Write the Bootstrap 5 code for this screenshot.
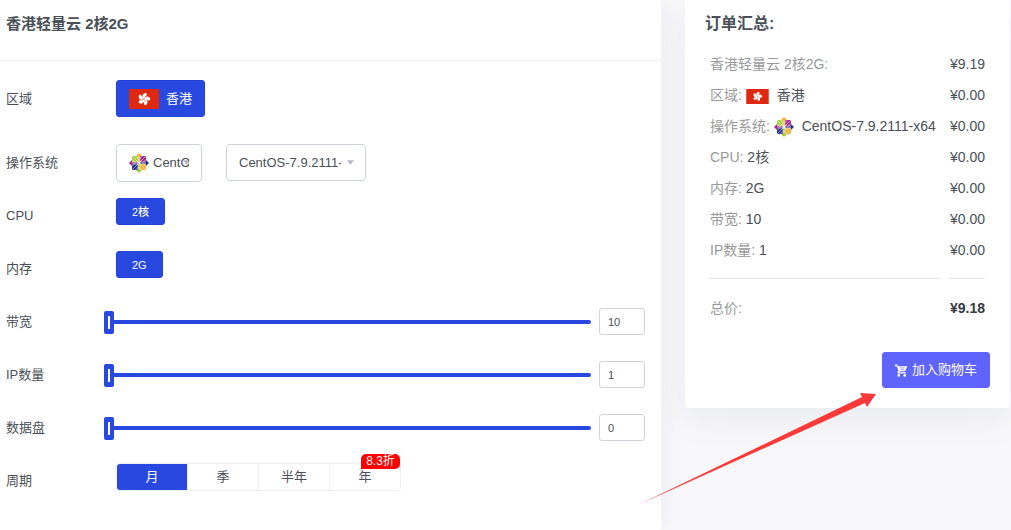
<!DOCTYPE html>
<html lang="zh-CN">
<head>
<meta charset="utf-8">
<meta name="viewport" content="width=device-width, initial-scale=1">
<title>香港轻量云 2核2G</title>
<link href="https://cdn.jsdelivr.net/npm/bootstrap@5.3.0/dist/css/bootstrap.min.css" rel="stylesheet">
<style>
  :root { --brand: #2948df; --ink: #495057; }
  body { background: #f8f8fb; color: var(--ink); font: 13px/20px "Liberation Sans", "Noto Sans CJK SC", sans-serif; }
  .config { min-height: 100vh; box-shadow: 0 0 24px rgba(18, 38, 83, .06); }
  .config-head { height: 61px; padding: 0 6px 12px; border-bottom: 1px solid #eff2f7; }
  .config-head h1 { font-size: 15px; line-height: 20px; font-weight: 700; }
  .opt { min-height: 53px; padding: 0 16px 0 6px; }
  .opt-first { min-height: 75px; }
  .opt-name { flex: 0 0 110px; }
  .opt-name.slim { flex-basis: 98px; }
  .btn-brand { --bs-btn-color: #fff; --bs-btn-bg: var(--brand); --bs-btn-border-color: #2442d6; --bs-btn-hover-color: #fff; --bs-btn-hover-bg: #2442d6; --bs-btn-border-radius: 3px; --bs-btn-font-size: 13px; --bs-btn-line-height: 20px; height: 37px; padding: 0 12px; }
  .btn-flag { gap: 7px; }
  .btn-mini { --bs-btn-font-size: 11px; height: 27px; padding: 0 15px; font-weight: 500; }
  .lift { padding-bottom: 8px; }
  .form-select.pick { height: 37px; padding: 0 24px 0 12px; border-color: #ced4da; border-radius: 4px; font-size: 13px; line-height: 20px; color: var(--ink); background-image: url("data:image/svg+xml,%3Csvg xmlns='http://www.w3.org/2000/svg' viewBox='0 0 8 5'%3E%3Cpath d='M0 0h8L4 5z' fill='%23b4b8c4'/%3E%3C/svg%3E"); background-size: 7px 5px; background-position: right 11px center; }
  .form-select.pick-os { height: 38px; width: 86px; padding: 0 12px 0 36px; }
  .form-select.pick-version { width: 140px; }
  .os-logo { left: 13px; top: 9px; pointer-events: none; }
  .slide { flex: 1; min-width: 0; height: 23px; margin: 0; background: none; appearance: none; -webkit-appearance: none; }
  .slide::-webkit-slider-runnable-track { height: 4px; background: var(--brand); border-radius: 2px; }
  .slide::-webkit-slider-thumb { -webkit-appearance: none; width: 10px; height: 23px; margin-top: -9px; border-radius: 2px; background: linear-gradient(#fff, #fff) center / 2px 13px no-repeat var(--brand); }
  .form-control.amount { width: 46px; height: 27px; padding: 0 8px; border-color: #ced4da; border-radius: 3px; font-size: 11px; line-height: 20px; color: var(--ink); }
  .period { height: 28px; margin-bottom: 8px; border: 1px solid #eff0f2; border-radius: 4px; }
  .period label { width: 71px; line-height: 26px; text-align: center; border-right: 1px solid #eff0f2; cursor: pointer; }
  .period label:last-child { width: 70px; border-right: 0; }
  .period label:first-of-type { border-radius: 3px 0 0 3px; }
  .period .btn-check:checked + label { background: var(--brand); color: #fff; }
  .off-tag { top: -10px; right: 0; width: 39px; height: 15px; border-radius: 5px 5px 5px 0; background: #f00; color: #fff; font-size: 12px; line-height: 15px; }
  .side { flex: 0 0 350px; padding: 0 1px 0 24px; }
  .order { padding: 14px 20px 20px; border-radius: 0 0 4px 4px; box-shadow: 0 12px 36px rgba(18, 38, 63, .06); }
  .order h2 { font-size: 16px; line-height: 20px; font-weight: 700; margin-bottom: 15px; }
  .bill { width: 100%; font-size: 14px; line-height: 31px; }
  .bill th { font-weight: 400; color: #999; padding: 0 5px; height: 31px; white-space: nowrap; }
  .bill td { width: 1px; padding: 0 5px; height: 31px; }
  .bill th span { color: var(--ink); }
  .bill .rule th, .bill .rule td { height: 27px; }
  .bill hr { margin: 11px 0 14px; border-color: #cfd2d6; opacity: .6; }
  .bill .sum { font-weight: 700; color: #343a40; }
  .btn-cart { --bs-btn-color: #fff; --bs-btn-bg: #6064ff; --bs-btn-border-color: #6064ff; --bs-btn-hover-color: #fff; --bs-btn-hover-bg: #5055ee; --bs-btn-border-radius: 3px; --bs-btn-font-size: 13px; --bs-btn-line-height: 20px; height: 36px; padding: 0 12px; margin-top: 28px; }
  .pointer { right: 135px; top: 391px; pointer-events: none; }
</style>
</head>
<body>
<svg class="d-none" aria-hidden="true">
  <symbol id="hk" viewBox="0 0 30 20">
    <path fill="#de2910" d="M0 0h30v20H0z"/>
    <g fill="#fff" transform="rotate(12 15 10)">
      <path id="petal" d="M14.900 9.900C12.300 8.800 11.800 5.400 15 3.800C16.200 3.500 17.300 4.500 16.900 5.600C16.600 6.800 15.200 7.800 14.900 9.900z"/>
      <use href="#petal" transform="rotate(72 15 10)"/><use href="#petal" transform="rotate(144 15 10)"/><use href="#petal" transform="rotate(216 15 10)"/><use href="#petal" transform="rotate(288 15 10)"/>
    </g>
  </symbol>
  <symbol id="centos" viewBox="0 0 20 20">
    <path fill="#f3b02c" d="M10 0l3.500 3.500h-7z"/><path fill="#a0288c" d="M0 10l3.500-3.500v7z"/><path fill="#2c2f86" d="M20 10l-3.500 3.500v-7z"/><path fill="#9fce2f" d="M10 20l-3.500-3.500h7z"/>
    <path fill="#a8cf38" d="M3 3h6.500v6.500H3z"/><path fill="#a0288c" d="M10.500 3H17v6.500h-6.500z"/><path fill="#2c2f86" d="M3 10.500h6.500V17H3z"/><path fill="#f3b02c" d="M10.500 10.500H17V17h-6.500z"/>
    <path fill="#f3b02c" d="M9.200 2h1.600v7H9.200z"/><path fill="#9fce2f" d="M9.200 11h1.600v7H9.200z"/><path fill="#a0288c" d="M2 9.200h7v1.600H2z"/><path fill="#2c2f86" d="M11 9.200h7v1.600h-7z"/>
    <path stroke="#fff" stroke-opacity=".75" stroke-width=".7" fill="none" d="M3 3l14 14M17 3L3 17M6.500 3l3 3M3 6.500l3 3M13.500 3l-3 3M17 6.500l-3 3M6.500 17l3-3M3 13.500l3-3M13.500 17l-3-3M17 13.500l-3-3M9 3v14M11 3v14M3 9h14M3 11h14"/>
  </symbol>
</svg>

<div class="d-flex">
  <main class="config bg-white flex-grow-1">
    <header class="config-head d-flex align-items-center"><h1 class="m-0">香港轻量云 2核2G</h1></header>
    <form>
      <div class="opt opt-first d-flex align-items-center">
        <span class="opt-name">区域</span>
        <button type="button" class="btn btn-brand btn-flag d-flex align-items-center"><svg width="30" height="20"><use href="#hk"/></svg>香港</button>
      </div>
      <div class="opt d-flex align-items-center">
        <label class="opt-name" for="os">操作系统</label>
        <div class="position-relative me-4">
          <select id="os" class="form-select pick pick-os"><option>CentOS</option></select>
          <svg class="os-logo position-absolute" width="20" height="20"><use href="#centos"/></svg>
        </div>
        <select class="form-select pick pick-version" aria-label="系统版本"><option>CentOS-7.9.2111-x64</option></select>
      </div>
      <div class="opt d-flex align-items-center">
        <span class="opt-name">CPU</span>
        <div class="lift"><button type="button" class="btn btn-brand btn-mini">2核</button></div>
      </div>
      <div class="opt d-flex align-items-center">
        <span class="opt-name">内存</span>
        <div class="lift"><button type="button" class="btn btn-brand btn-mini">2G</button></div>
      </div>
      <div class="opt d-flex align-items-center">
        <label class="opt-name slim" for="bw">带宽</label>
        <input id="bw" class="slide me-2" type="range" min="10" max="100" value="10">
        <input class="form-control amount" type="text" value="10" aria-label="带宽">
      </div>
      <div class="opt d-flex align-items-center">
        <label class="opt-name slim" for="ip">IP数量</label>
        <input id="ip" class="slide me-2" type="range" min="1" max="10" value="1">
        <input class="form-control amount" type="text" value="1" aria-label="IP数量">
      </div>
      <div class="opt d-flex align-items-center">
        <label class="opt-name slim" for="disk">数据盘</label>
        <input id="disk" class="slide me-2" type="range" min="0" max="100" value="0">
        <input class="form-control amount" type="text" value="0" aria-label="数据盘">
      </div>
      <div class="opt d-flex align-items-center">
        <span class="opt-name">周期</span>
        <div class="period position-relative d-flex">
          <input class="btn-check" type="radio" name="cycle" id="c1" checked><label for="c1">月</label>
          <input class="btn-check" type="radio" name="cycle" id="c2"><label for="c2">季</label>
          <input class="btn-check" type="radio" name="cycle" id="c3"><label for="c3">半年</label>
          <span class="off-tag position-absolute text-center">8.3折</span>
          <input class="btn-check" type="radio" name="cycle" id="c4"><label for="c4">年</label>
        </div>
      </div>
    </form>
  </main>

  <aside class="side position-relative">
    <section class="order bg-white">
      <h2>订单汇总:</h2>
      <table class="bill">
        <tbody>
          <tr><th>香港轻量云 2核2G:</th><td>¥9.19</td></tr>
          <tr><th>区域: <svg class="me-1" width="23" height="15"><use href="#hk"/></svg> <span>香港</span></th><td>¥0.00</td></tr>
          <tr><th>操作系统: <svg class="me-1" width="20" height="20"><use href="#centos"/></svg> <span>CentOS-7.9.2111-x64</span></th><td>¥0.00</td></tr>
          <tr><th>CPU: <span>2核</span></th><td>¥0.00</td></tr>
          <tr><th>内存: <span>2G</span></th><td>¥0.00</td></tr>
          <tr><th>带宽: <span>10</span></th><td>¥0.00</td></tr>
          <tr><th>IP数量: <span>1</span></th><td>¥0.00</td></tr>
          <tr class="rule"><th><hr></th><td><hr></td></tr>
          <tr><th>总价:</th><td class="sum">¥9.18</td></tr>
        </tbody>
      </table>
      <div class="d-flex justify-content-end">
        <button type="button" class="btn btn-cart d-flex align-items-center gap-1">
          <svg width="13" height="13" viewBox="0 0 24 24" fill="#fff"><path d="M0 1v3h3l3.400 7.600-1.600 2.500C4 15.800 5 17.500 7 17.500h13V15H7.800l1-1.800h8.700c.7 0 1.300-.4 1.600-1L23 4H5.400L4.200 1zM7 18.500a2.500 2.500 0 100 5 2.500 2.500 0 000-5zm11 0a2.500 2.500 0 100 5 2.500 2.500 0 000-5z"/><path d="M9 7.200h9M10 10.200h7" stroke="#6064ff" stroke-width="1"/></svg>加入购物车
        </button>
      </div>
    </section>
    <svg class="pointer position-absolute" width="236" height="114" viewBox="0 0 236 114" aria-hidden="true">
      <path fill="#fb3a39" d="M0 113L222 6 220 2 236 3 227 16 225 12z"/>
    </svg>
  </aside>
</div>
<script src="https://cdn.jsdelivr.net/npm/bootstrap@5.3.0/dist/js/bootstrap.bundle.min.js"></script>
</body>
</html>
